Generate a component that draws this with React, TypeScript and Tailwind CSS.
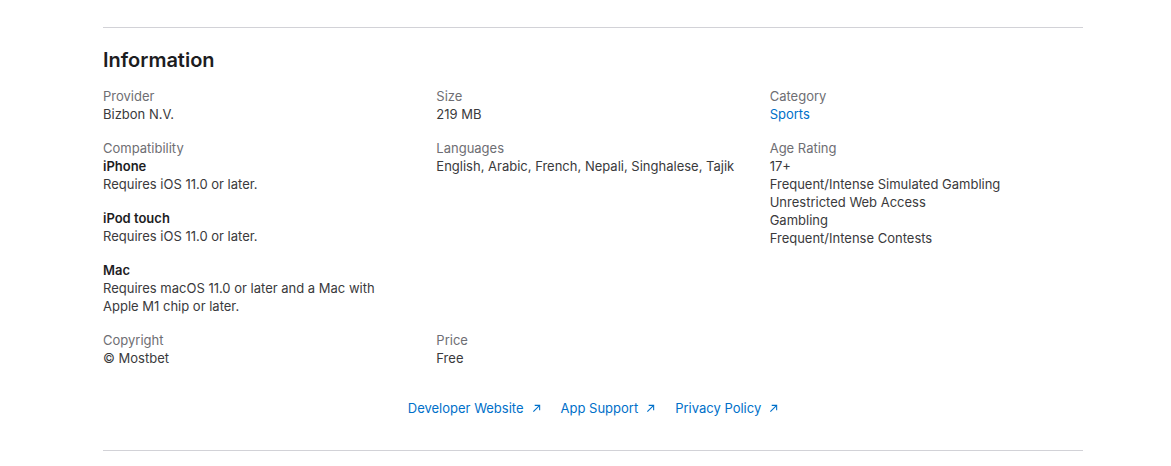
import React from 'react';

type Item = {
    label: string;
    content: React.ReactNode;
};

const ArrowIcon = () => (
    <svg viewBox="0 0 10 10" className="w-[9px] h-[9px] ml-[8px] inline-block" fill="none" stroke="currentColor" strokeWidth="1.2">
        <path d="M1.5 8.5 L8.5 1.5" />
        <path d="M3 1.5 H8.5 V7" />
    </svg>
);

const Line = ({ children }: { children: React.ReactNode }) => <div>{children}</div>;

const items: Item[] = [
    { label: 'Provider', content: <Line>Bizbon N.V.</Line> },
    { label: 'Size', content: <Line>219 MB</Line> },
    {
        label: 'Category',
        content: <a className="text-[#0070c9]" href="#">Sports</a>,
    },
    {
        label: 'Compatibility',
        content: (
            <div className="flex flex-col gap-4">
                <div>
                    <div className="font-semibold text-[#1d1d1f]">iPhone</div>
                    <div>Requires iOS 11.0 or later.</div>
                </div>
                <div>
                    <div className="font-semibold text-[#1d1d1f]">iPod touch</div>
                    <div>Requires iOS 11.0 or later.</div>
                </div>
                <div>
                    <div className="font-semibold text-[#1d1d1f]">Mac</div>
                    <div className="max-w-[285px]">Requires macOS 11.0 or later and a Mac with Apple M1 chip or later.</div>
                </div>
            </div>
        ),
    },
    { label: 'Languages', content: <Line>English, Arabic, French, Nepali, Singhalese, Tajik</Line> },
    {
        label: 'Age Rating',
        content: (
            <div>
                <div>17+</div>
                <div>Frequent/Intense Simulated Gambling</div>
                <div>Unrestricted Web Access</div>
                <div>Gambling</div>
                <div>Frequent/Intense Contests</div>
            </div>
        ),
    },
    { label: 'Copyright', content: <Line>© Mostbet</Line> },
    { label: 'Price', content: <Line>Free</Line> },
];

const links = ['Developer Website', 'App Support', 'Privacy Policy'];

export default function App() {
    return (
        <div className="min-h-screen bg-white font-['Inter',sans-serif] text-[13px] leading-[18px] text-[#3a3a3c]">
            <div className="w-[980px] ml-[103px] pt-[27px]">
                <section className="border-t border-b border-[#d2d2d7]">
                    <h2 className="text-[20px] leading-[24px] font-semibold text-[#1d1d1f] mt-[20px]">Information</h2>

                    <dl className="grid grid-cols-3 gap-x-5 gap-y-4 mt-[15px]">
                        {items.map((item) => (
                            <div key={item.label}>
                                <dt className="text-[#6e6e73]">{item.label}</dt>
                                <dd>{item.content}</dd>
                            </div>
                        ))}
                    </dl>

                    {/* links row */}
                    <ul className="flex justify-center gap-5 mt-[32px] mb-[33px] text-[#0070c9]">
                        {links.map((l) => (
                            <li key={l} className="flex items-center">
                                <a href="#">{l}</a>
                                <ArrowIcon />
                            </li>
                        ))}
                    </ul>
                </section>
            </div>
        </div>
    );
}
